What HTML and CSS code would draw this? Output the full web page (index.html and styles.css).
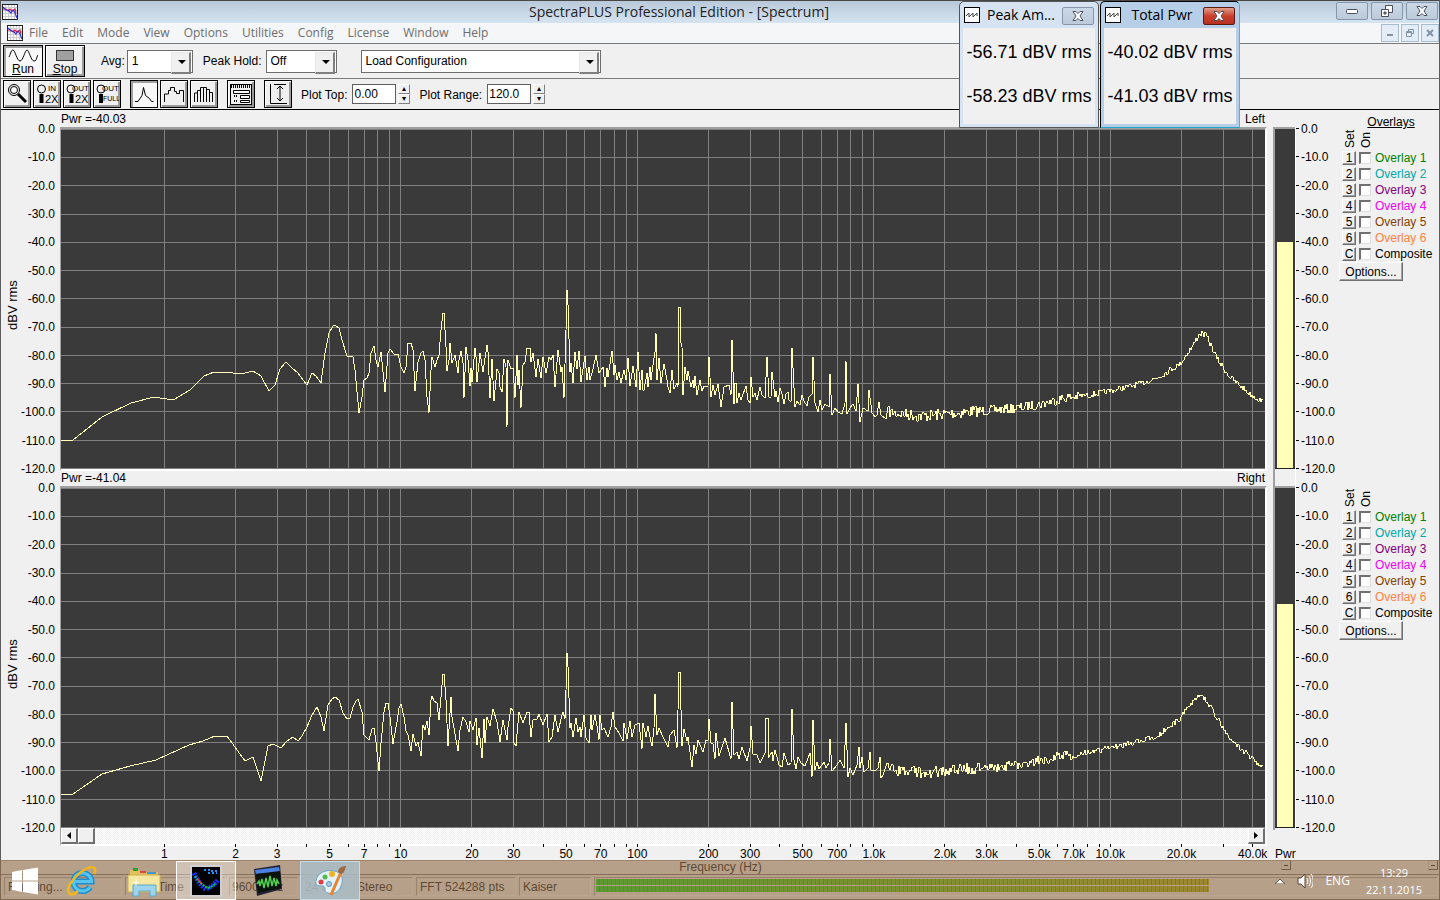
FILE: index.html
```
<!DOCTYPE html>
<html lang="en">
<head>
    <meta charset="UTF-8">
    <meta name="viewport" content="width=device-width, initial-scale=1.0">
    <title>SpectraPLUS Professional Edition - [Spectrum]</title>
    <link rel="stylesheet" href="styles.css">
</head>
<body>

<svg class="defs" width="0" height="0" aria-hidden="true">
    <symbol id="app-icon" viewBox="0 0 16 16">
        <rect x="0.5" y="0.5" width="15" height="15" fill="#fff" stroke="#222"/>
        <path d="M3.5 1v14M6.5 1v14M9.5 1v14M12.5 1v14M1 3.5h14M1 6.5h14M1 9.5h14M1 12.5h14" stroke="#ccc"/>
        <path d="M1 5l3 0 2 2 2-2 2 2 3-2 1 4" fill="none" stroke="#e02030" stroke-width="1.2"/>
        <path d="M1 3l3 3 2 0 3 3 2-3 2 3 2 5" fill="none" stroke="#3030e0" stroke-width="1.2"/>
    </symbol>
    <symbol id="wave-icon" viewBox="0 0 16 16">
        <rect x="0.5" y="0.5" width="15" height="15" fill="#fff" stroke="#000"/>
        <path d="M2 9l3-3v4l4-4v4l4-4v3" fill="none" stroke="#444"/>
    </symbol>
    <symbol id="x-icon" viewBox="0 0 12 10">
        <path d="M1 .5h3l2 2 2-2h3L8 5l3 4.5H8l-2-2-2 2H1L4 5z" fill="#fff" stroke="#4a4f5e"/>
    </symbol>
    <symbol id="restore-icon" viewBox="0 0 12 12">
        <path d="M4.500 .5h7v7h-7z" fill="#fff" stroke="#4a4f5e"/>
        <path d="M.5 4.500h7v7h-7z" fill="#fff" stroke="#4a4f5e"/>
        <path d="M3 7h2v2H3z" fill="#8a94a8" stroke="#4a4f5e"/>
    </symbol>
</svg>

<div class="window">
    <header class="titlebar">
        <svg class="app-icon"><use href="#app-icon"/></svg>
        <h1>SpectraPLUS Professional Edition - [Spectrum]</h1>
        <div class="win-buttons">
            <button aria-label="Minimize"><svg width="12" height="10"><rect x="0.5" y="3.5" width="11" height="4" rx="1" fill="#fff" stroke="#4a4f5e"/></svg></button>
            <button aria-label="Restore"><svg width="12" height="12"><use href="#restore-icon"/></svg></button>
            <button aria-label="Close"><svg width="12" height="10"><use href="#x-icon"/></svg></button>
        </div>
    </header>

    <nav class="menubar">
        <svg class="app-icon"><use href="#app-icon"/></svg>
        <a href="#">File</a>
        <a href="#">Edit</a>
        <a href="#">Mode</a>
        <a href="#">View</a>
        <a href="#">Options</a>
        <a href="#">Utilities</a>
        <a href="#">Config</a>
        <a href="#">License</a>
        <a href="#">Window</a>
        <a href="#">Help</a>
        <div class="mdi-buttons">
            <button aria-label="Minimize document"><svg width="8" height="8"><path d="M1 6h6" stroke="#8393a5" stroke-width="2"/></svg></button>
            <button aria-label="Restore document"><svg width="8" height="8"><path d="M2.500 2V.5h5v4H6M.5 2.500h5v5h-5zM1 3.500h4" fill="none" stroke="#8393a5"/></svg></button>
            <button aria-label="Close document"><svg width="8" height="8"><path d="M1 1l6 6M7 1L1 7" stroke="#8393a5" stroke-width="2"/></svg></button>
        </div>
    </nav>

    <div class="toolbar run-bar">
        <button class="tool run pressed">
            <svg width="30" height="13"><path d="M1 8C3 4 3 1 5 1s4 11 7 11 5-11 7-11 4 11 7 11 2-3 4-6" fill="none" stroke="#000"/></svg>
            <span><u>R</u>un</span>
        </button>
        <button class="tool run">
            <svg width="18" height="13"><rect x="0.5" y="1.5" width="17" height="10" fill="#a0a0a0" stroke="#333"/></svg>
            <span><u>S</u>top</span>
        </button>
        <label for="avg" class="avg-label">Avg:</label>
        <div class="combo combo-avg"><select id="avg"><option>1</option></select></div>
        <label for="peak">Peak Hold:</label>
        <div class="combo combo-peak"><select id="peak"><option>Off</option></select></div>
        <div class="combo combo-config"><select id="config" aria-label="Configuration"><option>Load Configuration</option></select></div>
    </div>

    <div class="toolbar view-bar">
        <div class="tool-group">
            <button class="tool" aria-label="Zoom"><svg viewBox="0 0 24 24"><circle cx="9" cy="8" r="5.500" fill="none" stroke="#000"/><circle cx="9" cy="8" r="3.500" fill="#fff" stroke="#000"/><path d="M13 12l8 8" stroke="#000" stroke-width="3"/></svg></button>
            <button class="tool" aria-label="Zoom in 2X"><svg viewBox="0 0 24 24"><circle cx="6.500" cy="7" r="4" fill="none" stroke="#000"/><path d="M6.500 12v9" stroke="#000" stroke-width="4"/><text x="13" y="9">IN</text><text x="10" y="21" class="big">2X</text></svg></button>
            <button class="tool" aria-label="Zoom out 2X"><svg viewBox="0 0 24 24"><circle cx="6" cy="7" r="4" fill="none" stroke="#000"/><path d="M6.500 12v9" stroke="#000" stroke-width="4"/><text x="7" y="9">OUT</text><text x="10" y="21" class="big">2X</text></svg></button>
            <button class="tool" aria-label="Zoom out full"><svg viewBox="0 0 24 24"><circle cx="6" cy="7" r="4" fill="none" stroke="#000"/><path d="M6 12v9" stroke="#000" stroke-width="4"/><text x="7" y="9">OUT</text><text x="8" y="19" class="small">FULL</text></svg></button>
        </div>
        <div class="tool-group">
            <button class="tool pressed" aria-label="Line"><svg viewBox="0 0 24 24"><path d="M3 19.500h3l4-6 1.500-8 2 8 4 3 2 3h2" fill="none" stroke="#000"/></svg></button>
            <button class="tool" aria-label="Steps"><svg viewBox="0 0 24 24"><path d="M2.500 20v-8h4V8.500h2V5.500h4v4h2v2h3v-3h4V20" fill="none" stroke="#000"/></svg></button>
            <button class="tool" aria-label="Bars"><svg viewBox="0 0 24 24"><path d="M2.500 20v-9h3v9V8.500h3V20V5.500h3V20M11.500 5.500h3V20M14.500 7.500h3V20M17.500 10.500h3V20" fill="none" stroke="#000"/></svg></button>
        </div>
        <div class="tool-group">
            <button class="tool" aria-label="Options"><svg viewBox="0 0 24 24"><rect x="1.500" y="2.500" width="21" height="20" fill="none" stroke="#000"/><path d="M2 4.500h20" stroke="#000" stroke-width="3" stroke-dasharray="1 1"/><path d="M4.500 8.500h16v3h-16zM11.500 13.500h9v3h-9zM11.500 18.500h9v2h-9z" fill="#fff" stroke="#000"/><path d="M5 14h4M5 19h4" stroke="#000" stroke-width="2" stroke-dasharray="1 1"/></svg></button>
        </div>
        <div class="tool-group">
            <button class="tool" aria-label="Autoscale"><svg viewBox="0 0 24 24"><path d="M4.500 2v19.500H21M8 2.500h12M14 4v15M11 7l3-3 3 3M11 16l3 3 3-3" fill="none" stroke="#000"/></svg></button>
        </div>
        <label for="plot-top">Plot Top:</label>
        <input type="text" id="plot-top" value="0.00">
        <div class="spin"><button aria-label="Plot top up">▴</button><button aria-label="Plot top down">▾</button></div>
        <label for="plot-range" class="range-label">Plot Range:</label>
        <input type="text" id="plot-range" value="120.0">
        <div class="spin"><button aria-label="Plot range up">▴</button><button aria-label="Plot range down">▾</button></div>
    </div>

    <main id="channels"></main>

    <div class="bottom">
        <div class="bottom-axis">
            <div class="scrollbar">
                <button class="arrow" aria-label="Scroll left"><svg width="4" height="7"><path d="M4 0v7L0 3.500z"/></svg></button>
                <button class="thumb" aria-label="Scroll position"></button>
                <button class="arrow last" aria-label="Scroll right"><svg width="4" height="7"><path d="M0 0v7L4 3.500z"/></svg></button>
            </div>
            <svg class="freq-axis" id="freqAxis"></svg>
        </div>
        <div class="bottom-meter">Pwr</div>
    </div>
    <div class="freq-title">
        <span>Frequency (Hz)</span>
        <button aria-label="Collapse plot"></button>
        <button aria-label="Collapse overlays"></button>
    </div>

    <footer class="statusbar">
        <span class="cell cell-run">Running...</span>
        <span class="cell cell-time">Real Time</span>
        <span class="cell cell-rate">96000 Hz</span>
        <span class="cell cell-bits">24 bit</span>
        <span class="cell cell-mode">Stereo</span>
        <span class="cell cell-fft">FFT 524288 pts</span>
        <span class="cell cell-window">Kaiser</span>
        <span class="cell cell-level"><span class="level"></span><span class="level"></span></span>
    </footer>
</div>

<section class="readout readout-peak">
    <div class="readout-title">
        <svg class="app-icon"><use href="#wave-icon"/></svg>
        <h2>Peak Am...</h2>
        <button aria-label="Close Peak Amplitude"><svg width="12" height="10"><use href="#x-icon"/></svg></button>
    </div>
    <div class="readout-body">
        <p>-56.71 dBV rms</p>
        <p>-58.23 dBV rms</p>
    </div>
</section>
<section class="readout readout-total active">
    <div class="readout-title">
        <svg class="app-icon"><use href="#wave-icon"/></svg>
        <h2>Total Pwr</h2>
        <button aria-label="Close Total Power"><svg width="12" height="10"><use href="#x-icon"/></svg></button>
    </div>
    <div class="readout-body">
        <p>-40.02 dBV rms</p>
        <p>-41.03 dBV rms</p>
    </div>
</section>

<div class="taskbar">
    <button class="task" aria-label="Start">
        <svg width="28" height="28" viewBox="0 0 28 28"><path d="M1 5l10-2v10.500H1zM12 3l15-2.500v13H12zM1 14.500h10V25L1 23zM12 14.500h15V27.500L12 25z" fill="#fff"/></svg>
    </button>
    <button class="task" aria-label="Internet Explorer">
        <svg width="32" height="32" viewBox="0 0 32 32">
            <path d="M24 22a9 9 0 1 1 1.500-5.500H9" fill="none" stroke="#1f8fd0" stroke-width="6"/>
            <path d="M24 22a9 9 0 1 1 1.500-5.500H9" fill="none" stroke="#58c4f0" stroke-width="3"/>
            <path d="M4 29C-2 25 8 10 20 4c8-4 11-1 8 5M4 29c3 1 6-1 8-3" fill="none" stroke="#f2b619" stroke-width="2.500"/>
        </svg>
    </button>
    <button class="task" aria-label="File Explorer">
        <svg width="34" height="32" viewBox="0 0 34 32">
            <path d="M3 5h9l2 2h17v20H3z" fill="#e2c15c"/>
            <path d="M6 3h5v3H6z" fill="#2ba02b"/><path d="M13 6h6v2h-6z" fill="#d44"/><path d="M20 7h9v2h-9z" fill="#3a9ad9"/>
            <path d="M1 10h32v17H1z" fill="#f6e7a0" stroke="#cfae52"/>
            <path d="M6 31V20h23v11h-6v-5H12v5z" fill="#9fd4ee" stroke="#5aa6cc"/>
            <path d="M9 14v7M6 17.500h6" stroke="#fff"/>
        </svg>
    </button>
    <button class="task current" aria-label="SpectraPLUS">
        <svg width="32" height="32" viewBox="0 0 32 32">
            <rect x="1" y="1" width="30" height="30" fill="#000" stroke="#d0d0d0" stroke-width="2"/>
            <path d="M4 8c3 7 7 13 12 16 5-2 9-5 12-9" fill="none" stroke="#1430ff" stroke-width="5" stroke-dasharray="2 1"/>
            <path d="M5 11c3 5 7 9 13 12 4-1 6-3 8-5" fill="none" stroke="#18c040" stroke-width="2" stroke-dasharray="2 1"/>
            <path d="M8 14l3 4" stroke="#f03020" stroke-width="1.500" stroke-dasharray="2 1"/>
            <path d="M14 5h6M18 8h9M21 6h6" stroke="#1890ff" stroke-width="2" stroke-dasharray="2 2"/>
        </svg>
    </button>
    <button class="task" aria-label="Oscilloscope">
        <svg width="30" height="32" viewBox="0 0 30 32">
            <path d="M1 4l26-4 2 24-25 7z" fill="#223"/>
            <path d="M2 5l24-3 1 5L3 9z" fill="#4a80e0"/>
            <path d="M3 9l24-3 1 17-23 5z" fill="#0c120c"/>
            <path d="M4 19l2-3 1 5 2-7 2 9 2-10 2 9 2-11 2 10 2-8 2 8 1-6 2 4" fill="none" stroke="#4fd04f" stroke-width="1.500"/>
        </svg>
    </button>
    <button class="task open" aria-label="Paint">
        <svg width="32" height="32" viewBox="0 0 32 32">
            <path d="M2 16C3 8 12 4 20 6c8 1 10 8 7 15-2 6-8 9-13 7-5-1-1-6-5-7-4 0-8 0-7-5z" fill="#e3f1fa" stroke="#6fa4c6"/>
            <circle cx="7" cy="17" r="2.500" fill="#e23b3b"/><circle cx="11" cy="12" r="2.500" fill="#56b84a"/><circle cx="18" cy="9" r="3" fill="#f1b321"/><circle cx="15" cy="19" r="2.500" fill="#a9cde4" stroke="#5a94b8"/>
            <path d="M17 30L27 7" stroke="#e8842c" stroke-width="3"/>
            <path d="M24 7c0-4 4-6 8-6-1 3-1 7-5 8z" fill="#9c6a3e"/>
        </svg>
    </button>
    <div class="tray">
        <svg width="10" height="6"><path d="M0 6l5-5 5 5z" fill="#fff" stroke="#6c5544"/></svg>
        <svg width="16" height="16" viewBox="0 0 16 16"><path d="M1 5h3l4-4v14l-4-4H1z" fill="#fff" stroke="#5c4636"/><path d="M10 5c1 2 1 4 0 6M12 3c2 3 2 7 0 10M14 1c3 4 3 10 0 14" fill="none" stroke="#fff"/></svg>
        <span>ENG</span>
        <div class="clock"><span>13:29</span><span>22.11.2015</span></div>
    </div>
</div>

<script src="script.js"></script>
</body>
</html>
```
FILE: styles.css
```
* {
    box-sizing: border-box;
}
body {
    margin: 0;
    height: 100vh;
    overflow: hidden;
    font-family: "Liberation Sans", Arial, sans-serif;
    font-size: 12px;
    line-height: 14px;
    color: #000;
    background: #f0f0f0;
}
button, input, select {
    font: inherit;
    color: inherit;
    padding: 0;
    margin: 0;
    border-radius: 0;
}
h1, h2, p {
    margin: 0;
    font-weight: normal;
}
svg {
    display: block;
}
.defs {
    position: absolute;
}
.window {
    display: flex;
    flex-direction: column;
    height: 100%;
    border: 1px solid #5c5c5c;
    border-top-color: #484848;
}

/* title and menu */
.titlebar {
    display: flex;
    align-items: center;
    height: 22px;
    padding: 0 1px;
    background: linear-gradient(#b9c9da, #d6e4f1);
}
.titlebar h1 {
    flex: 1;
    padding-left: 4px;
    text-align: center;
    font-family: "Open Sans", sans-serif;
    font-size: 14px;
    line-height: 20px;
    color: #222;
}
.app-icon {
    width: 16px;
    height: 16px;
    flex: none;
}
.win-buttons {
    display: flex;
    gap: 3px;
    align-self: flex-start;
}
.win-buttons button,
.readout-title button {
    display: flex;
    align-items: center;
    justify-content: center;
    width: 32px;
    height: 18px;
    margin-top: 1px;
    border: 1px solid #8995a9;
    border-radius: 2px;
    background: linear-gradient(#cbd8e6, #bccadb);
}
.menubar {
    display: flex;
    align-items: center;
    gap: 14px;
    height: 21px;
    padding: 0 0 0 6px;
    border-bottom: 1px solid #7a7a7a;
    background: #f5f6f8;
}
.menubar a {
    font-family: "Open Sans", sans-serif;
    font-size: 12px;
    color: #6d6d6d;
    text-decoration: none;
}
.menubar .app-icon {
    margin-right: -8px;
}
.mdi-buttons {
    display: flex;
    gap: 2px;
    margin-left: auto;
}
.mdi-buttons button {
    display: flex;
    align-items: center;
    justify-content: center;
    width: 18px;
    height: 18px;
    border: 1px solid #a9bccf;
    background: #e3edf7;
}

/* toolbars */
.toolbar {
    display: flex;
    align-items: center;
    padding-left: 2px;
}
.run-bar {
    height: 35px;
    gap: 2px;
    border-bottom: 1px solid #7a7a7a;
}
.view-bar {
    height: 31px;
    gap: 9px;
    border-bottom: 1px solid #000;
}
.tool-group {
    display: flex;
    gap: 2px;
}
.tool {
    width: 28px;
    height: 28px;
    border: 1px solid #000;
    background: #f0f0f0;
    box-shadow: inset 1px 1px #fff, inset -2px -2px #9a9a9a;
}
.tool.pressed {
    background: #f8f8f8;
    box-shadow: inset 2px 2px #a0a0a0;
}
.tool > svg {
    width: 24px;
    height: 24px;
    margin: auto;
}
.tool text {
    font-size: 8px;
}
.tool text.big {
    font-size: 11px;
}
.tool text.small {
    font-size: 7px;
}
.run {
    display: flex;
    flex-direction: column;
    align-items: center;
    width: 40px;
    height: 32px;
}
.run > svg {
    width: auto;
    height: 13px;
    margin: 3px 0 0;
}
.run span {
    line-height: 14px;
}
.avg-label {
    margin-left: 14px;
}
.combo {
    position: relative;
    height: 23px;
    border: 1px solid #6d6d6d;
    background: #fff;
}
.combo select {
    width: 100%;
    height: 100%;
    padding-left: 4px;
    border: 0;
    background: transparent;
    appearance: none;
}
.combo::before {
    content: "";
    position: absolute;
    top: 1px;
    right: 1px;
    width: 17px;
    height: 19px;
    border: 1px solid #e8e8e8;
    border-right: 2px solid #808080;
    border-bottom: 2px solid #808080;
    background: #f0f0f0;
    pointer-events: none;
}
.combo::after {
    content: "";
    position: absolute;
    top: 9px;
    right: 6px;
    border: 4px solid transparent;
    border-top-color: #000;
    border-bottom: 0;
    pointer-events: none;
}
.combo-avg {
    width: 66px;
    margin-right: 8px;
}
.combo-peak {
    width: 71px;
    margin-left: 2px;
    margin-right: 22px;
}
.combo-config {
    width: 240px;
}
.view-bar input {
    width: 44px;
    height: 20px;
    margin-left: -6px;
    padding: 0 1px;
    border: 1px solid #606060;
    background: #fff;
}
.view-bar label {
    padding: 1px 2px 0 0;
}
.spin {
    display: flex;
    flex-direction: column;
    margin-left: -7px;
}
.spin button {
    width: 12px;
    height: 10px;
    border: 1px solid #fff;
    border-right-color: #808080;
    border-bottom-color: #808080;
    background: #f0f0f0;
    font-size: 8px;
    line-height: 6px;
}

/* channels */
main {
    flex: 1;
    display: flex;
    flex-direction: column;
    padding-top: 2px;
    min-height: 0;
}
.channel {
    flex: 1;
    display: flex;
    min-height: 0;
}
.unit {
    width: 24px;
    padding-bottom: 28px;
    writing-mode: vertical-rl;
    transform: rotate(180deg);
    text-align: center;
    font-size: 13px;
    line-height: 24px;
}
.scale {
    display: flex;
    flex-direction: column;
    justify-content: space-between;
    margin: 10px 0 -5px;
}
.scale-left {
    align-items: flex-end;
    width: 35px;
    padding-right: 5px;
}
.scale-right {
    width: 43px;
}
.scale-right span::before {
    content: "";
    display: inline-block;
    width: 3px;
    height: 1px;
    margin-right: 2px;
    vertical-align: 4px;
    background: #000;
}
.plot {
    flex: 1;
    display: flex;
    flex-direction: column;
    min-width: 0;
}
.plot-head {
    display: flex;
    justify-content: space-between;
    height: 15px;
    padding: 0 2px 0 1px;
}
.frame {
    flex: 1;
    min-height: 0;
    border: 2px solid #a0a0a0;
    border-left-width: 1px;
    border-right-color: #fff;
    border-bottom-color: #fff;
    background: #3a3a3a;
}
.frame svg {
    width: 100%;
    height: 100%;
}
.grid line {
    stroke: #808080;
    shape-rendering: crispEdges;
}
.trace {
    fill: none;
    stroke: #ffffb8;
    stroke-width: 1;
    vector-effect: non-scaling-stroke;
    shape-rendering: crispEdges;
}
.meter {
    display: flex;
    width: 23px;
    margin: 15px 0 0 6px;
    padding-bottom: 2px;
    border-left: 2px solid #a0a0a0;
    border-right: 1px solid #fff;
}
.channel + .channel .meter {
    margin-top: 0;
    padding-top: 15px;
}
.tube {
    flex: 1;
    display: flex;
    align-items: flex-end;
    padding: 0 2px;
    border-top: 2px solid #a0a0a0;
    border-bottom: 1px solid #222;
    background: #3a3a3a;
}
.fill {
    flex: 1;
    background: #ffffb8;
}
.overlays {
    width: 100px;
}
.overlays h2 {
    height: 16px;
    padding: 3px 0 0 4px;
    text-align: center;
    font-size: 12px;
    line-height: 14px;
    text-decoration: underline;
}
.overlay-cols {
    display: flex;
    height: 22px;
    padding: 0 0 2px 3px;
}
.overlay-cols span {
    width: 16px;
    writing-mode: vertical-rl;
    transform: rotate(180deg);
    line-height: 16px;
}
.overlay-row {
    display: flex;
    align-items: center;
    height: 16px;
    padding-left: 3px;
}
.overlay-row button,
.options {
    border: 1px solid #fff;
    border-right-color: #707070;
    border-bottom-color: #707070;
    background: #f0f0f0;
    box-shadow: inset -1px -1px #a0a0a0;
}
.overlay-row button {
    width: 14px;
    height: 14px;
    line-height: 11px;
}
.overlay-row input {
    appearance: none;
    width: 12px;
    height: 12px;
    margin: 0 4px 0 3px;
    border: 1px solid #e0e0e0;
    border-top: 2px solid #707070;
    border-left: 2px solid #707070;
    background: #fff;
}
.options {
    width: 64px;
    height: 19px;
}
.c1 { color: #008000; }
.c2 { color: #00a8a8; }
.c3 { color: #800080; }
.c4 { color: #f000f0; }
.c5 { color: #804000; }
.c6 { color: #ff8040; }

/* frequency axis */
.bottom {
    display: flex;
    height: 32px;
    margin-top: -2px;
    padding-left: 59px;
}
.bottom-axis {
    flex: 1;
    min-width: 0;
}
.scrollbar {
    display: flex;
    height: 18px;
    padding-right: 2px;
    border-left: 1px solid #a0a0a0;
    border-bottom: 2px solid #fff;
    background: repeating-conic-gradient(#fff 0 25%, #f0f0f0 0 50%) 0 0 / 2px 2px;
}
.scrollbar button {
    display: flex;
    align-items: center;
    justify-content: center;
    width: 17px;
    height: 16px;
    border: 1px solid #fff;
    border-right: 2px solid #707070;
    border-bottom: 2px solid #707070;
    background: #f0f0f0;
}
.scrollbar .last {
    margin-left: auto;
}
.freq-axis {
    width: calc(100% - 3px);
    height: 16px;
    margin: -2px 2px 0 1px;
    overflow: visible;
}
.freq-axis line {
    stroke: #000;
    shape-rendering: crispEdges;
}
.freq-axis text {
    text-anchor: middle;
}
.bottom-meter {
    width: 166px;
    margin-left: 6px;
    padding: 19px 0 0 2px;
}
.freq-title {
    display: flex;
    height: 15px;
    padding-left: 159px;
    border-bottom: 1px solid #707070;
}
.freq-title span {
    flex: 1;
    text-align: center;
}
.freq-title button {
    width: 10px;
    height: 10px;
    margin-right: 1px;
    border: 1px solid #d0d0d0;
    border-right-color: #404040;
    border-bottom-color: #404040;
    background: linear-gradient(#000, #000) center / 4px 1px no-repeat;
}
.freq-title button + button {
    margin-left: 136px;
}

/* status bar */
.statusbar {
    display: flex;
    gap: 3px;
    height: 24px;
    padding: 2px 1px 3px 3px;
}
.cell {
    padding: 2px 0 0 3px;
    border: 1px solid #a0a0a0;
    border-right-color: #fff;
    border-bottom-color: #fff;
    white-space: nowrap;
    overflow: hidden;
}
.cell-run { width: 118px; }
.cell-time { width: 101px; padding-left: 4px; }
.cell-rate { width: 69px; padding-left: 2px; }
.cell-bits { width: 50px; }
.cell-mode { width: 59px; padding-left: 2px; }
.cell-fft { width: 100px; }
.cell-window { width: 72px; }
.cell-level {
    flex: 1;
    padding: 1px;
}
.level {
    display: block;
    width: 73%;
    height: 6px;
    margin-bottom: 1px;
    background:
        repeating-linear-gradient(90deg, transparent 0 3px, rgba(110, 80, 90, .7) 3px 4px),
        linear-gradient(90deg, #00e000, #b0b000);
}

/* floating readouts */
.readout {
    position: absolute;
    top: 1px;
    width: 140px;
    height: 127px;
    padding: 0 3px 3px;
    display: flex;
    flex-direction: column;
    border: 1px solid #555;
    border-radius: 5px 5px 0 0;
    background: #d6e3f2;
}
.readout-peak {
    right: 341px;
}
.readout-total {
    right: 200px;
}
.readout.active {
    border-color: #000 #24c4e8 #24a4c8 #000;
    background: #b6cee8;
}
.readout-title {
    display: flex;
    align-items: center;
    height: 26px;
    padding: 0 1px;
}
.readout-title h2 {
    flex: 1;
    text-align: center;
    font-family: "Open Sans", sans-serif;
    font-size: 14px;
}
.active .readout-title button {
    border-color: #5c1a14;
    background: linear-gradient(#e0a090, #c8402c 50%, #b83020);
}
.readout-body {
    flex: 1;
    padding-top: 2px;
    text-align: center;
    background: #f0f0f0;
}
.readout-body p {
    font-size: 18px;
    line-height: 44px;
    white-space: nowrap;
}

/* taskbar */
.taskbar {
    position: absolute;
    left: 0;
    right: 0;
    bottom: 0;
    height: 40px;
    display: flex;
    gap: 2px;
    background: rgba(148, 112, 78, .63);
    border-top: 1px solid rgba(120, 90, 60, .4);
    color: #fff;
    font-family: "Open Sans", sans-serif;
}
.task {
    display: flex;
    align-items: center;
    justify-content: center;
    width: 60px;
    border: 1px solid transparent;
    background: none;
}
.task:first-child {
    width: 50px;
}
.task.current {
    border-color: #fff;
    background: rgba(255, 255, 255, .35);
}
.task.open {
    border-color: #c8dae4;
    background: rgba(170, 190, 200, .85);
}
.tray {
    display: flex;
    align-items: center;
    gap: 12px;
    margin-left: auto;
    padding-right: 18px;
}
.clock {
    display: flex;
    flex-direction: column;
    align-items: center;
    margin-left: 4px;
    font-size: 11px;
    line-height: 17px;
}
```
FILE: script.js
```
const X_LEFT = 61;
const X_WIDTH = 1204;

// x,y pairs for the low end of each spectrum
const leftLow = `60,440 73,440 102,417 131,403 154,397 173,400 190,390 204,376 214,372 229,372 237,374 245,373 253,371 261,376 269,391 275,385 280,369 286,362 292,368 298,373 307,385 312,373 316,376 321,383 325,353 329,333 333,326 335,325 339,328 342,340 347,356 353,357 355,370 359,413 362,397 364,380 367,378 369,373 371,353 374,346 376,360 378,367 381,352 385,392 388,353 390,349 394,354 398,354 401,367 404,373 406,367 408,343 411,343 413,350 415,391 418,362 421,353 423,351 425,360 427,397 429,413 431,370 432,357 435,367 437,360 439,355 441,330 443,313 444,313 446,347 447,371 449,360 450,343 452,363 455,355 458,373 459,360 461,351 463,363 464,398 466,347 468,360 470,386 471,368 472,382 475,348 476,357 477,382 480,353 483,372 487,345 488,352 490,398 492,359 494,401 497,369 499,373 500,387 502,392 504,359 506,367 507,427 508,360 511,369 513,368 515,398 517,355 518,385 519,370 521,408 523,365 525,362 527,348 530,348 531,362 533,353 536,377 538,359 541,378 543,357 546,373 549,357 551,360 553,355 555,387 558,350 561,372 562,367 564,398 566,330 567,290 568,305 570,372 571,363 573,383 575,352 577,369 579,351 581,382 585,356 587,380 589,367 590,380 593,369 596,355 599,373 603,367 605,387 607,368 608,377 612,351 614,375 615,365 617,380 619,372 621,383 624,370 626,380 628,358 630,386 633,366 636,387 638,352 640,390 642,370 643,390 ` +
    `644,390 647,373 648,387 650,367 651,380 653,365 655,352 656,333 657,380 659,358 661,383 664,364 667,380 668,387 670,393 672,370 674,389 677,383 678,387 679,307 680,307 681,343 682,347 683,395 685,367 687,380 688,371 691,387 693,380 694,388 695,376 697,395 700,380 702,391 704,386 708,386 709,357 711,397 713,385 715,395 718,384 721,407 724,387 729,385 731,395 732,340 734,404 735,383 736,383 737,403 739,393 741,400 746,386 748,400 750,403 751,377 753,397 755,393 757,400 760,387 762,395 765,398 767,357 769,397 771,397 772,372 775,397 776,391 778,402 780,388 782,394 784,404 786,394 788,392 789,400 791,402 792,348 795,407 797,401 800,405 802,395 804,401 807,406 809,397 812,394 813,357 815,403 818,412 820,400 822,410 825,404 829,407 830,374 832,415 835,408 838,412 842,414 845,403 846,361 847,414 850,408 853,404 856,411 858,384 860,422 863,408 868,411 869,390 872,413 875,417 877,415 879,402 881,415 886,419 888,407`;

const rightLow = `60,794 73,794 102,774 130,766 156,760 189,745 203,741 215,736 227,736 245,761 253,757 261,781 268,746 273,744 281,748 287,741 293,737 298,741 302,736 307,727 312,715 317,707 321,717 324,731 328,705 332,699 335,697 339,700 343,713 347,719 350,718 353,707 356,701 358,699 362,712 364,735 369,740 372,729 374,728 376,742 379,771 381,743 384,712 386,703 388,703 390,717 393,744 397,722 399,708 401,704 404,717 406,731 408,735 411,751 413,734 416,746 418,742 421,756 423,725 425,730 427,721 429,735 431,700 432,696 434,701 437,703 439,720 441,697 443,674 444,674 446,700 448,746 451,697 452,717 454,728 458,751 460,730 463,717 466,722 469,732 470,721 473,730 476,718 477,745 479,728 482,758 484,719 485,743 487,717 490,726 493,709 497,722 500,742 503,720 507,740 508,727 511,708 513,711 514,743 516,746 519,712 523,723 527,712 529,712 531,737 533,720 537,719 539,714 543,725 547,714 549,742 552,737 555,715 558,732 562,715 563,712 565,719 566,690 567,653 568,667 570,728 571,723 573,737 576,718 578,732 580,727 581,737 584,715 586,738 589,743 591,715 592,730 595,715 597,726 599,740 600,715 602,730 604,728 608,737 611,727 613,712 615,727 619,733 623,741 624,723 627,739 630,721 632,737 635,725 639,723 642,749 643,723 646,737 648,726 650,737 652,746 654,728 655,694 657,735 659,728 663,737 668,747 670,735 674,730 677,748 679,672 680,672 682,746 684,729 687,741 688,737 692,767 694,745 696,754 698,740 703,752 706,740 708,740 709,719 711,743 713,744 715,759 716,733 719,756 725,738 731,759 732,702 734,755 737,752 739,759 742,747 747,761 750,748 751,726 753,754 757,755 760,763 765,753 766,718 768,718 769,757 772,752 773,761 775,750 777,757 779,765 782,767 784,753 788,765 791,763 792,709 794,760 796,769 798,757 801,763 805,766 810,753 812,777 813,720 815,770 817,762 819,769 824,762 826,768 829,763 830,739 832,771 837,765 840,760 844,768 846,723 848,777 850,768 853,775 857,765 859,747 860,768 862,757 864,772 868,768 870,752 871,770 875,771 878,768 880,757 881,778 883,775 886,766`;

// averaged curve for the high end, noise is added on top
const leftHigh = [[889, 412], [920, 416], [945, 414], [990, 410], [1010, 409], [1040, 404], [1065, 398], [1095, 394], [1110, 391], [1140, 384], [1160, 376], [1180, 364], [1192, 347], [1200, 333], [1206, 335], [1218, 360], [1230, 377], [1250, 394], [1264, 402]];
const rightHigh = [[887, 769], [925, 773], [950, 770], [1000, 767], [1050, 758], [1100, 750], [1140, 741], [1160, 734], [1180, 719], [1192, 703], [1200, 695], [1207, 701], [1218, 719], [1230, 738], [1250, 757], [1264, 768]];

const channels = [
    { name: "Left", pwr: -40.03, top: 129, low: leftLow, high: leftHigh, seed: 7 },
    { name: "Right", pwr: -41.04, top: 488, low: rightLow, high: rightHigh, seed: 23 }
];

function noisyTail(anchors, seed) {
    let points = [];
    for (let i = 1; i < anchors.length; i++) {
        const [x0, y0] = anchors[i - 1];
        const [x1, y1] = anchors[i];
        for (let x = x0; x < x1; x++) {
            seed = (seed * 16807) % 2147483647;
            const amp = x < 980 ? 6 : x < 1080 ? 5 : 3;
            const noise = (seed / 2147483647 * 2 - 1) * amp;
            points.push(x + "," + Math.round(y0 + (y1 - y0) * (x - x0) / (x1 - x0) + noise));
        }
    }
    return points.join(" ");
}

function freqPercent(f) {
    const x = 164.3 + 236.5 * Math.log10(f);
    return (x - X_LEFT) / X_WIDTH * 100;
}

function frequencies() {
    let list = [];
    for (let decade = 1; decade <= 10000; decade *= 10) {
        for (let n = 1; n < 10; n++) {
            if (n * decade <= 40000) list.push(n * decade);
        }
    }
    return list;
}

function gridLines() {
    let lines = "";
    for (let i = 0; i <= 12; i++) {
        const y = (i * 28.27 + 0.3) / 340 * 100;
        lines += `<line x1="0" x2="100%" y1="${y}%" y2="${y}%"/>`;
    }
    frequencies().forEach(f => {
        const x = freqPercent(f);
        lines += `<line x1="${x}%" x2="${x}%" y1="0" y2="100%"/>`;
    });
    return lines;
}

function scaleLabels() {
    let html = "";
    for (let db = 0; db >= -120; db -= 10) {
        html += `<span>${db.toFixed(1)}</span>`;
    }
    return html;
}

function overlayRows(name) {
    let html = "";
    for (let i = 1; i <= 7; i++) {
        const key = i < 7 ? i : "C";
        const text = i < 7 ? "Overlay " + i : "Composite";
        const id = name + "-overlay-" + key;
        html += `
            <div class="overlay-row">
                <button>${key}</button>
                <input type="checkbox" id="${id}">
                <label for="${id}" class="c${i}">${text}</label>
            </div>`;
    }
    return html;
}

function renderChannels() {
    document.getElementById("channels").innerHTML = channels.map((ch, i) => `
        <section class="channel">
            <div class="unit">dBV rms</div>
            <div class="scale scale-left">${scaleLabels()}</div>
            <div class="plot">
                <div class="plot-head"><span>Pwr =${ch.pwr}</span><span>${ch.name}</span></div>
                <div class="frame">
                    <svg>
                        <g class="grid">${gridLines()}</g>
                        <svg viewBox="${X_LEFT} ${ch.top} ${X_WIDTH} 340" preserveAspectRatio="none">
                            <polyline class="trace" points="${ch.low} ${noisyTail(ch.high, ch.seed)}"/>
                        </svg>
                    </svg>
                </div>
            </div>
            <div class="meter"><div class="tube"><div class="fill" style="height: ${(120 + ch.pwr) / 1.2}%"></div></div></div>
            <div class="scale scale-right">${scaleLabels()}</div>
            <div class="overlays">
                <h2>${i === 0 ? "Overlays" : ""}</h2>
                <div class="overlay-cols"><span>Set</span><span>On</span></div>
                ${overlayRows(ch.name)}
                <button class="options">Options...</button>
            </div>
        </section>`).join("");
}

function renderFrequencyAxis() {
    const labels = [1, 2, 3, 5, 7];
    let html = "";
    frequencies().forEach(f => {
        const x = freqPercent(f);
        html += `<line x1="${x}%" x2="${x}%" y1="0" y2="3"/>`;
        const lead = f / Math.pow(10, Math.floor(Math.log10(f)));
        if (f === 40000 || (labels.includes(lead) && f !== 30000)) {
            const text = f >= 1000 ? (f / 1000).toFixed(1) + "k" : f;
            html += `<text x="${x}%" y="14">${text}</text>`;
        }
    });
    document.getElementById("freqAxis").innerHTML = html;
}

renderChannels();
renderFrequencyAxis();
```
